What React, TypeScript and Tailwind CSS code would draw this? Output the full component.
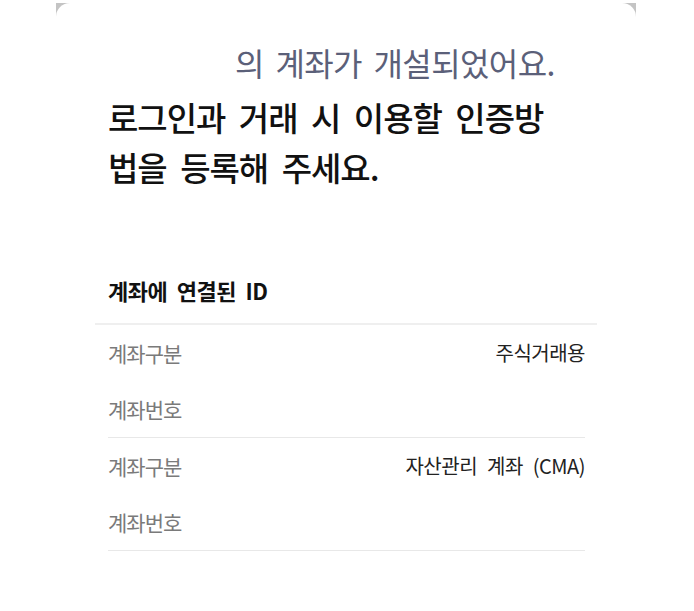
import React from "react";

const font = { fontFamily: '"Noto Sans CJK KR", "Noto Sans", sans-serif' };

function Row({ label, value }: { label: string; value?: string }) {
  return (
    <div className="flex h-[56px] items-center justify-between">
      <span className="text-[21px] leading-[26px] tracking-[-1px] text-[#7a7a7a]">{label}</span>
      {value ? (
        <span className="text-[20px] leading-[26px] tracking-[-0.5px] text-[#222222] [word-spacing:6px]">
          {value}
        </span>
      ) : null}
    </div>
  );
}

export default function App() {
  return (
    <div className="min-h-[611px] w-[694px] bg-white" style={font}>
      <div className="ml-[56px] w-[580px] bg-[#c4c4c4]">
        <div className="mt-[3px] h-[608px] rounded-t-[14px] bg-white pt-[39px]">
          <p className="pl-[179px] text-[32px] leading-[40px] tracking-[-0.6px] text-[#5b6079] [word-spacing:5px]">
            의 계좌가 개설되었어요.
          </p>
          <h1 className="mt-[10px] pl-[52px] text-[33px] font-medium leading-[50px] tracking-[-1px] text-[#111111] [word-spacing:7px]">
            로그인과 거래 시 이용할 인증방
            <br />
            법을 등록해 주세요.
          </h1>
          <h2 className="mt-[84px] pl-[52px] text-[22px] font-bold leading-[28px] tracking-[-0.5px] text-[#111111] [word-spacing:5px]">
            계좌에 연결된 ID
          </h2>
          <div className="mx-[39px] mt-[19px] h-[2px] bg-[#efefef]" />
          <div className="ml-[52px] mr-[51px]">
            <Row label="계좌구분" value="주식거래용" />
            <Row label="계좌번호" />
            <div className="h-px bg-[#e8e8e8]" />
            <Row label="계좌구분" value="자산관리 계좌 (CMA)" />
            <Row label="계좌번호" />
            <div className="h-px bg-[#e8e8e8]" />
          </div>
        </div>
      </div>
    </div>
  );
}
